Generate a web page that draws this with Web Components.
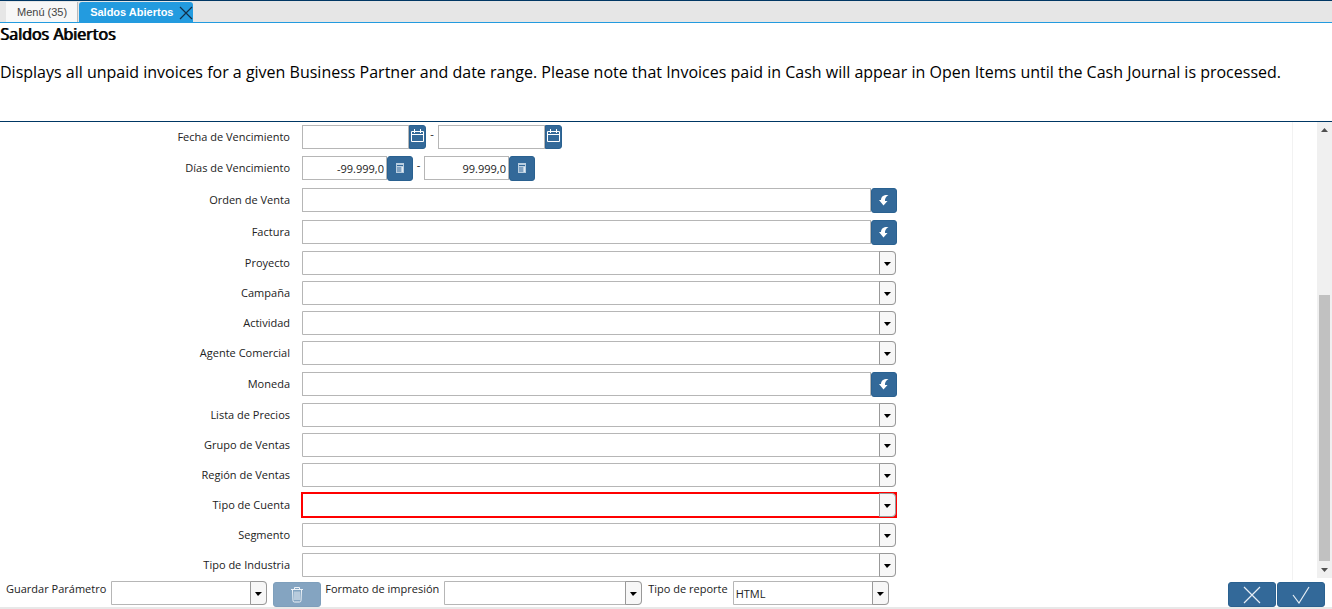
<!DOCTYPE html>
<html lang="es">
<head>
<meta charset="utf-8">
<meta name="viewport" content="width=device-width, initial-scale=1">
<title>Saldos Abiertos</title>
<style>
  body {
    margin: 0;
    background: #fff;
    color: #222;
    font-family: "Open Sans", "Noto Sans", sans-serif;
    font-size: 11px;
  }
</style>
</head>
<body>
<report-window>
  <tab-bar slot="tabs">
    <tab-item>Menú (35)</tab-item>
    <tab-item active>Saldos Abiertos</tab-item>
  </tab-bar>
  <report-header slot="header">
    <span slot="title">Saldos Abiertos</span>
    Displays all unpaid invoices for a given Business Partner and date range. Please note that Invoices paid in Cash will appear in Open Items until the Cash Journal is processed.
  </report-header>
  <date-range label="Fecha de Vencimiento"></date-range>
  <number-range label="Días de Vencimiento" from="-99.999,0" to="99.999,0"></number-range>
  <lookup-field label="Orden de Venta"></lookup-field>
  <lookup-field label="Factura"></lookup-field>
  <combo-field label="Proyecto"></combo-field>
  <combo-field label="Campaña"></combo-field>
  <combo-field label="Actividad"></combo-field>
  <combo-field label="Agente Comercial"></combo-field>
  <lookup-field label="Moneda"></lookup-field>
  <combo-field label="Lista de Precios"></combo-field>
  <combo-field label="Grupo de Ventas"></combo-field>
  <combo-field label="Región de Ventas"></combo-field>
  <combo-field label="Tipo de Cuenta" required></combo-field>
  <combo-field label="Segmento"></combo-field>
  <combo-field label="Tipo de Industria"></combo-field>
  <report-footer slot="footer"></report-footer>
</report-window>

<script>
const icons = {
  calendar: `<svg width="13" height="16" viewBox="0 0 13 16" fill="none" stroke="#fff"><path d="M.5 2.500h12v10H.5zM1 5.500h11M3.500 0v4M9.500 0v4"/></svg>`,
  calculator: `<svg width="10" height="12" viewBox="0 0 10 12"><path fill="#b9cee0" d="M1 0h8v10H1z"/><path fill="#336999" d="M2 2h6v1H2z"/><path fill="#7fa1c1" d="M2 4h4v5H2z"/><path fill="#e3ecf4" d="M7 4h1v5H7z"/></svg>`,
  lookup: `<svg width="12" height="14" viewBox="0 0 12 14"><path fill="#fff" d="M10.500 1C6 .5 3 2.500 3 6H1l4.500 5.500L9.500 7H7C6.800 4.500 7.800 2.500 10.500 1z"/></svg>`,
  trash: `<svg width="14" height="18" viewBox="0 0 14 18" fill="none" stroke="#e3ecf4"><path d="M1 3.500h12M4.500 3V1.500h5V3M2.500 4l.5 10.500q0 1.500 1.500 1.500h5q1.500 0 1.500-1.500l.5-10.500M5 5.500v8.500M7 5.500v8.500M9 5.500v8.500"/></svg>`,
  cancel: `<svg width="18" height="18" viewBox="0 0 18 18" fill="none" stroke="#e6eef5" stroke-width="1.200"><path d="M1 1l16 16M17 1L1 17"/></svg>`,
  ok: `<svg width="18" height="18" viewBox="0 0 18 18" fill="none" stroke="#e6eef5" stroke-width="1.200"><path d="M1 9l6 8L17 1"/></svg>`,
  close: `<svg width="14" height="14" viewBox="0 0 14 14" fill="none" stroke="#12304a" stroke-width="1.200"><path d="M1 1l12 12M13 1L1 13"/></svg>`
};

// Styles shared by every element that holds form controls
const controlStyles = `
  * { box-sizing: border-box; }
  label { color: #222; }
  input, select, button { margin: 0; font: inherit; }
  input {
    flex: 1;
    min-width: 0;
    height: 24px;
    padding: 1px 2px 0;
    border: 1px solid #b6b6b6;
    background: #fff;
    color: #222;
  }
  button {
    display: flex;
    flex: none;
    align-items: center;
    justify-content: center;
    height: 25px;
    padding: 0;
    border: 1px solid #2a6190;
    border-radius: 3px;
    background: #336999;
    cursor: pointer;
  }
  .combo {
    position: relative;
    display: block;
    height: 24px;
  }
  .combo select {
    appearance: none;
    width: 100%;
    height: 24px;
    padding: 1px 20px 0 2px;
    border: 1px solid #b6b6b6;
    border-radius: 0 4px 4px 0;
    background: #fff;
    color: #222;
  }
  .combo::before {
    content: '';
    position: absolute;
    top: 0;
    right: 0;
    box-sizing: border-box;
    width: 17px;
    height: 24px;
    border: 1px solid #999;
    border-radius: 0 4px 4px 0;
    background: #f7f7f7;
    pointer-events: none;
  }
  .combo::after {
    content: '';
    position: absolute;
    top: 11px;
    right: 5px;
    border: 4px solid transparent;
    border-width: 4px 4px 0 3px;
    border-top-color: #000;
    pointer-events: none;
  }
`;

class ReportWindow extends HTMLElement {
  constructor() {
    super();
    this.attachShadow({ mode: 'open' });
  }

  connectedCallback() {
    this.shadowRoot.innerHTML = `
      <style>
        :host {
          display: flex;
          flex-direction: column;
          min-height: 100vh;
        }
        .body {
          display: flex;
          flex: 1;
        }
        .params {
          flex: 1;
          margin-bottom: -2px;
          border-right: 1px solid #f2f2f2;
        }
        .scrollbar {
          display: flex;
          flex-direction: column;
          align-items: center;
          width: 15px;
          margin-left: 24px;
          background: #f0f0f0;
        }
        .scrollbar svg { flex: none; }
        .track {
          display: flex;
          flex: 1;
          align-items: flex-end;
        }
        .thumb {
          width: 11px;
          height: 63%;
          background: #c1c1c1;
        }
      </style>
      <slot name="tabs"></slot>
      <slot name="header"></slot>
      <div class="body">
        <main class="params"><slot></slot></main>
        <div class="scrollbar">
          <svg width="15" height="17" viewBox="0 0 15 17"><path fill="#505050" d="M4 10h7L7.500 6z"/></svg>
          <div class="track"><div class="thumb"></div></div>
          <svg width="15" height="17" viewBox="0 0 15 17"><path fill="#505050" d="M4 7h7l-3.500 4z"/></svg>
        </div>
      </div>
      <slot name="footer"></slot>
    `;
  }
}
customElements.define('report-window', ReportWindow);

class TabBar extends HTMLElement {
  constructor() {
    super();
    this.attachShadow({ mode: 'open' });
  }

  connectedCallback() {
    this.shadowRoot.innerHTML = `
      <style>
        :host {
          display: flex;
          align-items: flex-end;
          box-sizing: border-box;
          height: 23px;
          padding-left: 6px;
          gap: 1px;
          border-top: 1px solid #003764;
          border-bottom: 1px solid #239bdf;
          background: #e6e6e6;
        }
      </style>
      <slot></slot>
    `;
  }
}
customElements.define('tab-bar', TabBar);

class TabItem extends HTMLElement {
  constructor() {
    super();
    this.attachShadow({ mode: 'open' });
  }

  connectedCallback() {
    const active = this.hasAttribute('active');
    this.shadowRoot.innerHTML = `
      <style>
        :host {
          display: flex;
          height: 20px;
          border-right: 1px solid #bbb;
          background: #f7f7f7;
          color: #444;
          font: 11px/20px "Liberation Sans", Arial, sans-serif;
        }
        :host([active]) {
          border: 0;
          border-radius: 3px 3px 0 0;
          background: #239bdf;
          color: #fff;
          font-weight: bold;
        }
        a {
          padding: 0 10px 0 11px;
          color: inherit;
          text-decoration: none;
        }
        :host([active]) a { padding-right: 6px; }
        button {
          display: flex;
          align-items: center;
          padding: 2px 0 0;
          border: 0;
          background: none;
        }
      </style>
      <a href="#"><slot></slot></a>
      ${active ? `<button type="button" aria-label="Cerrar">${icons.close}</button>` : ''}
    `;
  }
}
customElements.define('tab-item', TabItem);

class ReportHeader extends HTMLElement {
  constructor() {
    super();
    this.attachShadow({ mode: 'open' });
  }

  connectedCallback() {
    this.shadowRoot.innerHTML = `
      <style>
        :host {
          display: block;
          padding-bottom: 38px;
          border-bottom: 1px solid #003764;
          color: #000;
          font-size: 16px;
          line-height: 22px;
        }
        h1, p { margin: 0; font-size: 16px; }
        h1 {
          margin-bottom: 16px;
          font-weight: normal;
          text-shadow: 1px 0 #000;
        }
      </style>
      <h1><slot name="title"></slot></h1>
      <p><slot></slot></p>
    `;
  }
}
customElements.define('report-header', ReportHeader);

class ParamField extends HTMLElement {
  constructor() {
    super();
    this.attachShadow({ mode: 'open' });
  }

  getControl() {
    return '';
  }

  getStyles() {
    return '';
  }

  connectedCallback() {
    this.label = this.getAttribute('label');
    this.shadowRoot.innerHTML = `
      <style>
        ${controlStyles}
        :host {
          display: grid;
          grid-template-columns: 302fr 595fr 395fr;
          padding: 3px 0;
        }
        label {
          padding-right: 12px;
          line-height: 24px;
          text-align: right;
        }
        .control { display: flex; }
        ${this.getStyles()}
      </style>
      <label for="field">${this.label}</label>
      <div class="control">${this.getControl()}</div>
    `;
  }
}

class DateRange extends ParamField {
  getStyles() {
    return `
      input { flex: none; width: 107px; }
      button {
        width: 17px;
        height: 24px;
        border-radius: 0 3px 3px 0;
      }
      .dash { width: 12px; line-height: 18px; text-align: center; }
    `;
  }

  getControl() {
    return `
      <input id="field" type="text">
      <button type="button" aria-label="Calendario">${icons.calendar}</button>
      <span class="dash">-</span>
      <input type="text" aria-label="${this.label}">
      <button type="button" aria-label="Calendario">${icons.calendar}</button>
    `;
  }
}
customElements.define('date-range', DateRange);

class NumberRange extends ParamField {
  getStyles() {
    return `
      :host { padding-top: 4px; }
      input { flex: none; width: 85px; text-align: right; }
      button { width: 26px; }
      .dash { width: 11px; line-height: 18px; text-align: center; }
    `;
  }

  getControl() {
    return `
      <input id="field" type="text" value="${this.getAttribute('from')}">
      <button type="button" aria-label="Calculadora">${icons.calculator}</button>
      <span class="dash">-</span>
      <input type="text" aria-label="${this.label}" value="${this.getAttribute('to')}">
      <button type="button" aria-label="Calculadora">${icons.calculator}</button>
    `;
  }
}
customElements.define('number-range', NumberRange);

class LookupField extends ParamField {
  getStyles() {
    return `
      :host { padding-top: 4px; }
      button { width: 26px; }
    `;
  }

  getControl() {
    return `
      <input id="field" type="text">
      <button type="button" aria-label="Buscar">${icons.lookup}</button>
    `;
  }
}
customElements.define('lookup-field', LookupField);

class ComboField extends ParamField {
  getStyles() {
    return `
      .combo { flex: 1; margin-right: 1px; }
      :host([required]) .combo { outline: 2px solid #f00; outline-offset: -1px; }
    `;
  }

  getControl() {
    return `<span class="combo"><select id="field"><option></option></select></span>`;
  }
}
customElements.define('combo-field', ComboField);

class ReportFooter extends HTMLElement {
  constructor() {
    super();
    this.attachShadow({ mode: 'open' });
  }

  connectedCallback() {
    this.shadowRoot.innerHTML = `
      <style>
        ${controlStyles}
        :host {
          display: flex;
          align-items: flex-start;
          padding: 3px 7px 0 6px;
          border-bottom: 2px solid #e8e8e8;
        }
        label { margin-right: 5px; line-height: 16px; }
        button { width: 48px; margin-top: 1px; }
        .combo { width: 156px; margin-right: 6px; }
        .combo.format { width: 198px; }
        .delete { margin-right: 4px; opacity: .6; }
        .actions {
          display: flex;
          gap: 1px;
          margin-left: auto;
        }
      </style>
      <label for="saved">Guardar Parámetro</label>
      <span class="combo"><select id="saved"><option></option></select></span>
      <button type="button" class="delete" aria-label="Borrar" disabled>${icons.trash}</button>
      <label for="format">Formato de impresión</label>
      <span class="combo format"><select id="format"><option></option></select></span>
      <label for="type">Tipo de reporte</label>
      <span class="combo"><select id="type"><option>HTML</option></select></span>
      <div class="actions">
        <button type="button" aria-label="Cancelar">${icons.cancel}</button>
        <button type="button" aria-label="Aceptar">${icons.ok}</button>
      </div>
    `;
  }
}
customElements.define('report-footer', ReportFooter);
</script>
</body>
</html>
